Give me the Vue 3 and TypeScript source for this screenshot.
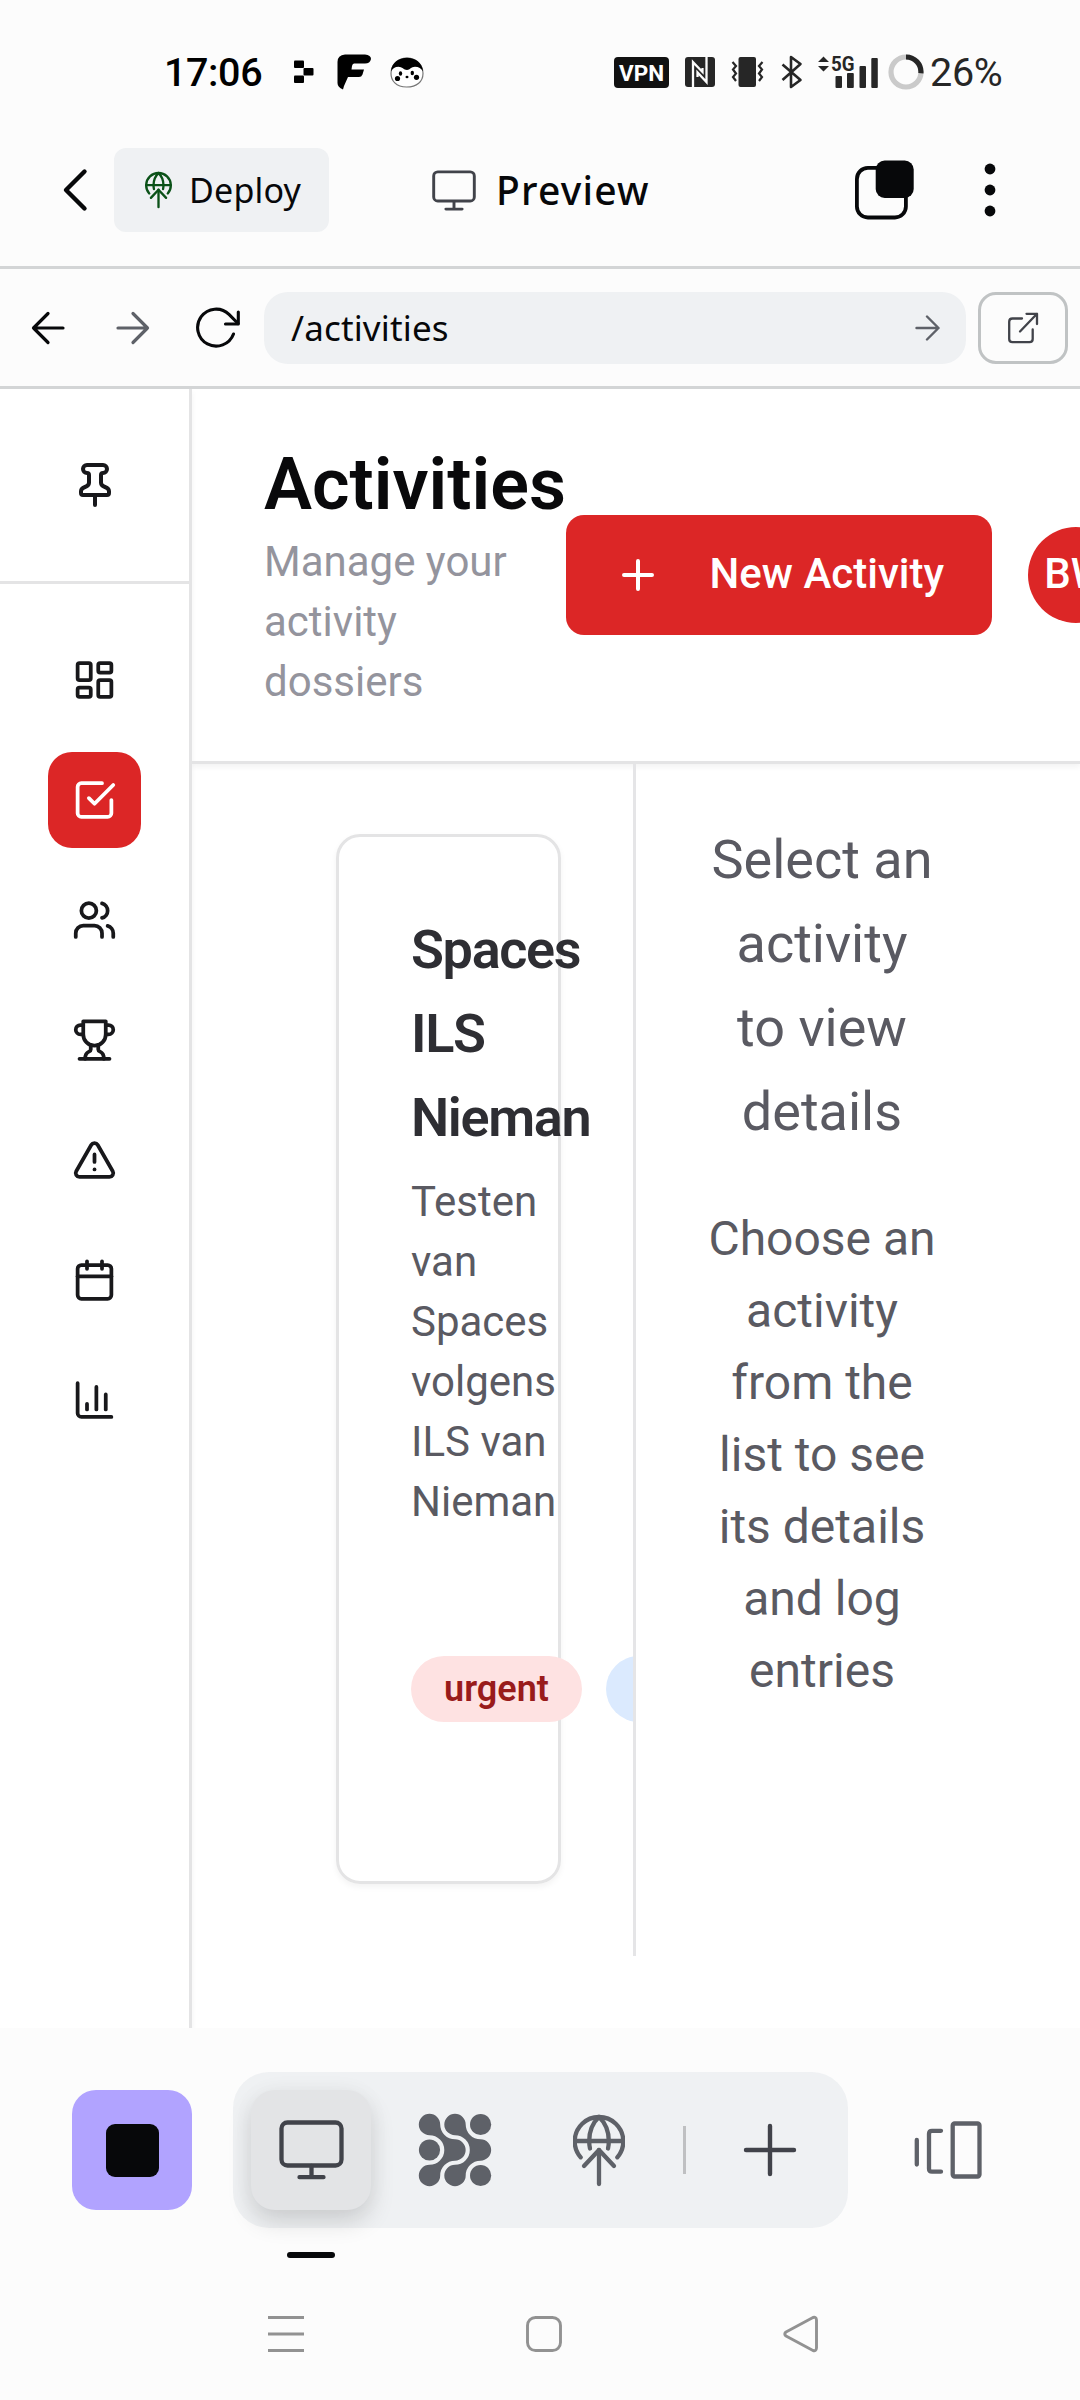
<script setup lang="ts">
interface NavItem {
  name: string
  paths: string[]
  active?: boolean
}

const navItems: NavItem[] = [
  {
    name: 'Dashboard',
    paths: [
      'M4 3h5a1 1 0 0 1 1 1v7a1 1 0 0 1-1 1H4a1 1 0 0 1-1-1V4a1 1 0 0 1 1-1z',
      'M15 3h5a1 1 0 0 1 1 1v3a1 1 0 0 1-1 1h-5a1 1 0 0 1-1-1V4a1 1 0 0 1 1-1z',
      'M15 12h5a1 1 0 0 1 1 1v7a1 1 0 0 1-1 1h-5a1 1 0 0 1-1-1v-7a1 1 0 0 1 1-1z',
      'M4 16h5a1 1 0 0 1 1 1v3a1 1 0 0 1-1 1H4a1 1 0 0 1-1-1v-3a1 1 0 0 1 1-1z',
    ],
  },
  {
    name: 'Activities',
    active: true,
    paths: ['m9 11 3 3L22 4', 'M21 12v7a2 2 0 0 1-2 2H5a2 2 0 0 1-2-2V5a2 2 0 0 1 2-2h11'],
  },
  {
    name: 'People',
    paths: [
      'M16 21v-2a4 4 0 0 0-4-4H6a4 4 0 0 0-4 4v2',
      'M9 3a4 4 0 1 1 0 8a4 4 0 1 1 0-8z',
      'M22 21v-2a4 4 0 0 0-3-3.87',
      'M16 3.13a4 4 0 0 1 0 7.75',
    ],
  },
  {
    name: 'Trophies',
    paths: [
      'M6 9H4.5a2.5 2.5 0 0 1 0-5H6',
      'M18 9h1.5a2.5 2.5 0 0 0 0-5H18',
      'M4 22h16',
      'M10 14.66V17c0 .55-.47.98-.97 1.21C7.85 18.75 7 20.24 7 22',
      'M14 14.66V17c0 .55.47.98.97 1.21C16.15 18.75 17 20.24 17 22',
      'M18 2H6v7a6 6 0 0 0 12 0V2Z',
    ],
  },
  {
    name: 'Alerts',
    paths: [
      'm21.73 18-8-14a2 2 0 0 0-3.48 0l-8 14A2 2 0 0 0 4 21h16a2 2 0 0 0 1.73-3',
      'M12 9v4',
      'M12 17h.01',
    ],
  },
  {
    name: 'Calendar',
    paths: [
      'M8 2v4',
      'M16 2v4',
      'M5 4h14a2 2 0 0 1 2 2v14a2 2 0 0 1-2 2H5a2 2 0 0 1-2-2V6a2 2 0 0 1 2-2z',
      'M3 10h18',
    ],
  },
  {
    name: 'Reports',
    paths: ['M3 3v16a2 2 0 0 0 2 2h16', 'M18 17V9', 'M13 17V5', 'M8 17v-3'],
  },
]

const globePaths: string[] = [
  'M7.7 44.3A24.3 24.3 0 1 1 44.3 44.3',
  'M2 28H50',
  'M26 4C19.5 10 16.2 19 16.2 28Q16.2 32 17 35.5',
  'M26 4C32.5 10 35.8 19 35.8 28Q35.8 32 35 35.5',
  'M26 37V71',
  'M11 53L26 37L41 53',
]
</script>

<template>
  <div class="screen">
    <header class="status">
      <span class="time">17:06</span>
      <svg class="st-app" width="20" height="24" viewBox="294 61 20 24">
        <rect x="294" y="61.5" width="10" height="7.5" rx="1" />
        <rect x="303.5" y="69" width="10" height="7.5" rx="1" />
        <rect x="294" y="76.5" width="10" height="7.5" rx="1" />
      </svg>
      <svg class="st-f" width="36" height="36" viewBox="336 54 36 36">
        <path d="M345 54.5H365Q371 55 371 59Q370 63.5 365 63.5H354Q352.500 63.5 352 66L351.500 69.5H364L362.500 74.5Q361.500 77 359 77H348L344 86L343 89.5Q337.500 87 337.500 83V62Q337.500 55 345 54.5Z" />
      </svg>
      <svg class="st-face" width="34" height="31" viewBox="390 57.5 34 31">
        <path d="M407 58.7C417 58.7 423 66 423 74C423 82 417 87.500 406.500 87.500C396 87.500 391 81 391 74C391 66 397 58.7 407 58.7Z" fill="#fff" stroke="#777" stroke-width="1.200" />
        <path d="M391 72C391.500 63 399 58.300 407 58.300C415 58.300 422.500 63 423 72C421.500 69 418.500 67.300 415 67.300C411 67.300 410 70.500 407 70.500C404 70.500 402 67.300 398.500 67.300C395 67.300 392.500 69 391 72Z" />
        <ellipse cx="400.5" cy="74" rx="1.7" ry="2.3" />
        <ellipse cx="412.300" cy="73.500" rx="1.7" ry="2.3" />
        <circle cx="397.500" cy="79" r="2.600" />
        <circle cx="416.500" cy="77.800" r="2.600" />
        <ellipse cx="407" cy="77.500" rx="1.500" ry="1.200" />
      </svg>
      <span class="vpn">VPN</span>
      <svg class="st-nfc" width="30" height="30" viewBox="0 0 30 30">
        <rect width="30" height="30" rx="3" />
        <path d="M8 31V5.200L17.500 15V11M21.500 -1V25L12.500 15.500V20" fill="none" stroke="#fcfcfc" stroke-width="2.3" />
      </svg>
      <svg class="st-vib" width="33" height="30" viewBox="0 0 33 30">
        <rect x="7.500" width="17.500" height="30" rx="2" />
        <path d="M1.500 5L5 9L2 12.500L5 16.500L2 20L5 24M31.500 5L28 9L31 12.500L28 16.500L31 20L28 24" fill="none" stroke="#262626" stroke-width="2.2" />
      </svg>
      <svg class="st-bt" width="22" height="34" viewBox="0 0 22 34">
        <path d="M1.500 9.500L19.500 25L10 32V2L19.500 9L1.500 25" fill="none" stroke="#262626" stroke-width="2.6" stroke-linejoin="round" />
      </svg>
      <svg class="st-signal" width="62" height="34" viewBox="817 54 62 34">
        <path d="M818 61L823.500 55.500L829 61ZM818 65L823.500 70.500L829 65Z" />
        <text x="831" y="70" textLength="23.5" lengthAdjust="spacingAndGlyphs">5G</text>
        <rect x="835.5" y="75" width="6.5" height="12" rx="1" />
        <rect x="847" y="72" width="6.8" height="15" rx="1" />
        <rect x="859.500" y="65" width="6.5" height="22" rx="1" />
        <rect x="871.300" y="57" width="6.5" height="30" rx="1" />
      </svg>
      <svg class="st-ring" width="36" height="36" viewBox="0 0 36 36" fill="none" stroke-width="5.2">
        <circle cx="18" cy="18" r="15" stroke="#cacaca" />
        <path d="M18 3A15 15 0 0 1 32.900 19.200" stroke="#262626" />
      </svg>
      <span class="percent">26%</span>
    </header>

    <div class="titlebar">
      <svg class="back" width="26" height="44" viewBox="0 0 26 44" fill="none">
        <path d="M22.500 3.500L4 22L22.500 40.500" stroke="#07080a" stroke-width="4.4" stroke-linecap="round" stroke-linejoin="round" />
      </svg>
      <button class="deploy">
        <svg width="27" height="37.5" viewBox="0 0 52 74" fill="none" stroke="#0b5218" stroke-width="4.6" stroke-linecap="round" stroke-linejoin="round">
          <path v-for="d in globePaths" :key="d" :d="d" />
        </svg>
        <span>Deploy</span>
      </button>
      <svg class="mon-small" width="44" height="41" viewBox="0 0 65 60" fill="none" stroke="#41434a" stroke-width="4.3" stroke-linecap="round">
        <rect x="2.500" y="2.500" width="60" height="43" rx="6" />
        <path d="M32.500 46V57M20.500 57.500H44.500" />
      </svg>
      <span class="preview">Preview</span>
      <svg class="copy" width="60" height="60" viewBox="0 0 60 60">
        <rect x="1.900" y="7.900" width="49" height="49.600" rx="11" fill="none" stroke="#07080a" stroke-width="3.8" />
        <rect x="20.700" y="0.500" width="38" height="37.500" rx="9" fill="#07080a" />
      </svg>
      <svg class="dots" width="12" height="54" viewBox="0 0 12 54" fill="#07080a">
        <circle cx="6" cy="6" r="5.400" /><circle cx="6" cy="27" r="5.400" /><circle cx="6" cy="48" r="5.400" />
      </svg>
    </div>

    <div class="urlbar">
      <svg class="u-back" width="34" height="34" viewBox="0 0 34 34" fill="none" stroke="#07080a" stroke-width="3.2" stroke-linecap="round" stroke-linejoin="round">
        <path d="M32 17H2.500M17 2.500L2.500 17L17 31.500" />
      </svg>
      <svg class="u-fwd" width="34" height="34" viewBox="0 0 34 34" fill="none" stroke="#5e6168" stroke-width="3.2" stroke-linecap="round" stroke-linejoin="round">
        <path d="M2 17H31.500M17 2.500L31.500 17L17 31.500" />
      </svg>
      <svg class="u-reload" width="46" height="42" viewBox="195 307 46 42" fill="none" stroke="#07080a" stroke-width="3.1" stroke-linecap="round" stroke-linejoin="round">
        <path d="M233.500 334A18.500 18.500 0 1 1 229 314.300L238 323.500" />
        <path d="M238.300 312V324H225.500" />
      </svg>
      <div class="url">
        <span>/activities</span>
        <svg width="25" height="26" viewBox="0 0 25 26" fill="none" stroke="#5e6168" stroke-width="2.4" stroke-linecap="round" stroke-linejoin="round">
          <path d="M1.500 13H23.500M12 1.500L23.500 13L12 24.500" />
        </svg>
      </div>
      <button class="external">
        <svg width="32" height="32" viewBox="0 0 32 32" fill="none" stroke="#41434a" stroke-width="2.3" stroke-linecap="round" stroke-linejoin="round">
          <path d="M15 6.500H5.500Q2.200 6.500 2.200 9.800V27Q2.200 30.200 5.500 30.200H22.500Q25.700 30.200 25.700 27V17.500" />
          <path d="M13 19.500L30 1.800M19.500 1.800H30V12" />
        </svg>
      </button>
    </div>

    <div class="app">
      <aside class="sidebar">
        <div class="pin">
          <svg class="lucide" width="48" height="48" viewBox="0 0 24 24">
            <path d="M12 17v5" />
            <path d="M9 10.760a2 2 0 0 1-1.110 1.790l-1.780.9A2 2 0 0 0 5 15.240V16a1 1 0 0 0 1 1h12a1 1 0 0 0 1-1v-.76a2 2 0 0 0-1.110-1.790l-1.780-.9A2 2 0 0 1 15 10.760V7a1 1 0 0 1 1-1 2 2 0 0 0 0-4H8a2 2 0 0 0 0 4 1 1 0 0 1 1 1z" />
          </svg>
        </div>
        <nav>
          <a v-for="item in navItems" :key="item.name" class="nav-item" :class="{ active: item.active }">
            <svg class="lucide" width="45" height="48" viewBox="0 0 24 24">
              <path v-for="d in item.paths" :key="d" :d="d" />
            </svg>
          </a>
        </nav>
      </aside>

      <main class="main">
        <div class="page-head">
          <div class="heading">
            <h1>Activities</h1>
            <p>Manage your activity dossiers</p>
          </div>
          <button class="new">
            <svg class="lucide" width="48" height="48" viewBox="0 0 24 24"><path d="M5 12h14M12 5v14" /></svg>
            <span>New Activity</span>
          </button>
          <span class="avatar">BW</span>
        </div>

        <div class="columns">
          <section class="list">
            <article class="card">
              <h3>Spaces ILS Nieman</h3>
              <p>Testen van Spaces volgens ILS van Nieman</p>
              <div class="badges">
                <span class="badge urgent">urgent</span>
                <span class="badge blue"></span>
              </div>
            </article>
          </section>
          <section class="detail">
            <p class="big">Select an activity to view details</p>
            <p class="small">Choose an activity from the list to see its details and log entries</p>
          </section>
        </div>
      </main>
    </div>

    <footer class="bottom">
      <div class="dock-row">
        <button class="stop"><i></i></button>
        <div class="dock">
          <div class="slot selected">
            <svg width="65" height="60" viewBox="0 0 65 60" fill="none" stroke="#41434a" stroke-width="4.3" stroke-linecap="round">
              <rect x="2.500" y="2.500" width="60" height="43" rx="6" />
              <path d="M32.500 46V57M20.500 57.200H44.500" />
            </svg>
            <i class="indicator"></i>
          </div>
          <div class="slot">
            <svg width="74" height="74" viewBox="418 2113 74 74" fill="#5e6168">
              <path d="M429.500 2135.200A10.700 10.700 0 1 1 440.200 2124.500A14.800 14.800 0 0 0 455 2139.300A10.700 10.700 0 0 1 455 2160.700A14.800 14.800 0 0 0 440.200 2175.500A10.700 10.700 0 1 1 429.500 2164.800A14.800 14.800 0 0 0 429.500 2135.200Z" />
              <path transform="translate(25.5 0)" d="M429.500 2135.200A10.700 10.700 0 1 1 440.200 2124.500A14.800 14.800 0 0 0 455 2139.300A10.700 10.700 0 0 1 455 2160.700A14.800 14.800 0 0 0 440.200 2175.500A10.700 10.700 0 1 1 429.500 2164.800A14.800 14.800 0 0 0 429.500 2135.200Z" />
              <circle cx="429.500" cy="2150" r="10.600" />
              <circle cx="480.600" cy="2124.500" r="10.600" />
              <circle cx="480.600" cy="2175.500" r="10.600" />
            </svg>
          </div>
          <div class="slot">
            <svg width="52" height="74" viewBox="0 0 52 74" fill="none" stroke="#5e6168" stroke-width="4.3" stroke-linecap="round" stroke-linejoin="round">
              <path v-for="d in globePaths" :key="d" :d="d" />
            </svg>
          </div>
          <i class="divider"></i>
          <div class="slot">
            <svg width="54" height="54" viewBox="0 0 54 54" stroke="#41434a" stroke-width="4.4" stroke-linecap="round"><path d="M3 27H51M27 3V51" /></svg>
          </div>
        </div>
        <svg class="tabs" width="70" height="60" viewBox="913 2120 70 60" fill="none" stroke="#5e6168" stroke-width="4.3" stroke-linecap="round" stroke-linejoin="round">
          <path d="M916.800 2140V2164.500M941 2130.800H932Q929 2130.800 929 2133.800V2168.700Q929 2171.700 932 2171.700H941" />
          <rect x="952.700" y="2123.500" width="26.800" height="53" rx="2" />
        </svg>
      </div>
      <div class="sysnav">
        <svg width="36" height="38" viewBox="0 0 36 38" stroke="#929292" stroke-width="3.2"><path d="M0 2.500H36M0 19H36M0 35.500H36" /></svg>
        <svg width="36" height="38" viewBox="0 0 36 38" fill="none" stroke="#929292" stroke-width="2.9"><rect x="1.500" y="2.500" width="33" height="33" rx="8" /></svg>
        <svg width="36" height="38" viewBox="0 0 36 38" fill="none" stroke="#929292" stroke-width="2.9" stroke-linejoin="round"><path d="M3 17L30 2.500Q33.200 1.500 33.500 5V33Q33.200 36.500 30 35.500L3 21Q0.500 19 3 17Z" /></svg>
      </div>
    </footer>
  </div>
</template>

<style>
body {
  margin: 0;
  background: #fcfcfc;
}
</style>

<style scoped>
* {
  box-sizing: border-box;
}
svg {
  display: block;
  flex: none;
}
h1, h3, p {
  margin: 0;
}
button {
  border: 0;
  padding: 0;
  font: inherit;
}
.screen {
  width: 1080px;
  height: 2400px;
  overflow: hidden;
  display: flex;
  flex-direction: column;
  background: #fcfcfc;
  font-family: Roboto, sans-serif;
  color: #07080a;
}
.status {
  height: 112px;
  padding: 32px 0 0 164px;
  display: flex;
  align-items: center;
  flex: none;
  fill: #000;
}
.time, .percent {
  font-size: 39.5px;
  font-weight: 500;
  line-height: 46px;
  flex: none;
  margin-top: 2px;
}
.time {
  width: 130px;
  letter-spacing: -0.4px;
  color: #000;
}
.st-f { margin-left: 22px; }
.st-face { margin-left: 18px; }
.vpn {
  width: 55px;
  height: 31px;
  margin-left: 190px;
  border-radius: 4px;
  background: #111;
  color: #fff;
  font: 700 22.5px/32px Roboto, sans-serif;
  text-align: center;
  flex: none;
}
.st-nfc, .st-vib, .st-bt, .st-signal { fill: #262626; }
.st-nfc { margin-left: 16px; }
.st-vib { margin-left: 16px; }
.st-bt { margin-left: 17px; }
.st-signal { margin-left: 14px; overflow: visible; }
.st-signal text { font: 700 20.5px Roboto, sans-serif; }
.st-ring { margin-left: 9px; }
.percent {
  margin-left: 6px;
  letter-spacing: -0.3px;
  font-weight: 450;
  color: #262626;
}

.titlebar {
  height: 157px;
  padding: 2px 0 0 62px;
  display: flex;
  align-items: center;
  flex: none;
  border-bottom: 3px solid #d3d5d6;
}
.deploy {
  width: 215px;
  height: 84px;
  margin-left: 26px;
  padding-left: 31px;
  border-radius: 12px;
  background: #eff1f3;
  display: flex;
  align-items: center;
  gap: 17px;
  font: 400 34px/44px "Noto Sans", sans-serif;
  letter-spacing: 0.2px;
  color: #07080a;
}
.mon-small { margin-left: 103px; }
.preview {
  width: 156px;
  margin-left: 20px;
  font: 500 39px/52px "Noto Sans", sans-serif;
  letter-spacing: 1.2px;
  white-space: nowrap;
}
.copy { margin-left: 203px; }
.dots { margin-left: 69px; }

.urlbar {
  height: 120px;
  padding-left: 31px;
  display: flex;
  align-items: center;
  flex: none;
  border-bottom: 3px solid #d3d5d6;
}
.u-fwd { margin-left: 51px; }
.u-reload { margin-left: 45px; }
.url {
  width: 702px;
  height: 72px;
  margin-left: 23px;
  padding: 0 26px 0 27px;
  border-radius: 24px;
  background: #eff1f3;
  display: flex;
  align-items: center;
  justify-content: space-between;
  font: 400 35px/48px "Noto Sans", sans-serif;
  letter-spacing: 0.15px;
}
.external {
  width: 90px;
  height: 72px;
  margin-left: 12px;
  border: 3px solid #c0c3c4;
  border-radius: 18px;
  background: transparent;
  display: flex;
  align-items: center;
  justify-content: center;
}

.app {
  height: 1639px;
  display: flex;
  flex: none;
  overflow: hidden;
  background: #fff;
}
.lucide {
  fill: none;
  stroke: currentColor;
  stroke-width: 2;
  stroke-linecap: round;
  stroke-linejoin: round;
}
.sidebar {
  width: 192px;
  flex: none;
  border-right: 3px solid #e4e4e5;
  color: #18181b;
  box-shadow: 0 3px 6px rgba(0, 0, 0, 0.05);
}
.pin {
  height: 195px;
  border-bottom: 3px solid #e4e4e5;
  display: flex;
  align-items: center;
  justify-content: center;
}
nav {
  padding: 48px;
  display: flex;
  flex-direction: column;
  gap: 24px;
}
.nav-item {
  height: 96px;
  border-radius: 24px;
  display: flex;
  align-items: center;
  justify-content: center;
}
.nav-item.active {
  background: #dc2626;
  color: #fff;
}
.main {
  width: 888px;
  overflow: hidden;
}
.page-head {
  height: 375px;
  padding: 48px 0 0 72px;
  border-bottom: 3px solid #e4e4e5;
  box-shadow: 0 3px 6px rgba(0, 0, 0, 0.05);
  display: flex;
  align-items: flex-start;
}
.heading {
  width: 302px;
  flex: none;
}
h1 {
  font-size: 72px;
  line-height: 95px;
  font-weight: 600;
  color: #09090b;
}
.heading p {
  width: 262px;
  font-size: 42px;
  line-height: 60px;
  color: #94949d;
}
.new {
  width: 426px;
  height: 120px;
  margin-top: 78px;
  padding: 0 48px;
  border-radius: 18px;
  background: #dc2626;
  color: #fff;
  display: flex;
  align-items: center;
  justify-content: space-between;
  flex: none;
  font-size: 42px;
  font-weight: 500;
  white-space: nowrap;
}
.new span { padding-bottom: 3px; }
.avatar {
  width: 96px;
  height: 96px;
  margin: 90px 0 0 36px;
  border-radius: 50%;
  background: #dc2626;
  color: #fff;
  flex: none;
  font-size: 42px;
  font-weight: 500;
  line-height: 94px;
  text-align: center;
}
.columns {
  margin: 0 72px;
  height: 1192px;
  display: flex;
}
.list {
  width: 372px;
  padding: 70px 72px 72px;
  border-right: 3px solid #e5e5e7;
  overflow: hidden;
  flex: none;
}
.card {
  width: 225px;
  height: 1050px;
  padding: 71px 72px;
  border: 3px solid #e4e4e5;
  border-radius: 24px;
  box-shadow: 0 3px 6px rgba(0, 0, 0, 0.05);
}
.card h3 {
  font-size: 54px;
  line-height: 84px;
  font-weight: 600;
  letter-spacing: -1.35px;
  color: #2e2e33;
}
.card p {
  width: 150px;
  margin-top: 12px;
  font-size: 42px;
  line-height: 60px;
  color: #5a5a62;
}
.badges {
  display: flex;
  gap: 24px;
  margin-top: 124px;
}
.badge {
  height: 66px;
  border-radius: 33px;
  flex: none;
  font-size: 36px;
  line-height: 66px;
  font-weight: 600;
  text-align: center;
}
.urgent {
  width: 171px;
  background: #fee2e2;
  color: #991b1b;
}
.blue {
  width: 150px;
  background: #dbeafe;
}
.detail {
  flex: 1;
  padding: 54px 72px 0;
  text-align: center;
  color: #5a5a62;
}
.big {
  font-size: 54px;
  line-height: 84px;
}
.small {
  margin: 49px -4px 0;
  font-size: 48px;
  line-height: 72px;
}

.bottom {
  flex: 1;
  padding-top: 44px;
}
.dock-row {
  height: 156px;
  padding-left: 72px;
  display: flex;
  align-items: center;
}
.stop {
  width: 120px;
  height: 120px;
  border-radius: 24px;
  background: #b1a3ff;
  display: flex;
  align-items: center;
  justify-content: center;
}
.stop i {
  width: 53px;
  height: 53px;
  border-radius: 9px;
  background: #07080a;
}
.dock {
  width: 615px;
  height: 156px;
  margin-left: 41px;
  padding: 18px;
  border-radius: 36px;
  background: #eff1f3;
  display: flex;
  align-items: center;
  gap: 24px;
}
.slot {
  position: relative;
  width: 120px;
  height: 120px;
  border-radius: 24px;
  display: flex;
  align-items: center;
  justify-content: center;
  flex: none;
}
.selected {
  background: #e3e4e6;
  box-shadow: 0 12px 24px rgba(0, 0, 0, 0.14), 0 0 24px rgba(0, 0, 0, 0.03);
}
.indicator {
  position: absolute;
  left: 36px;
  top: 162px;
  width: 48px;
  height: 6px;
  border-radius: 3px;
  background: #07080a;
}
.divider {
  width: 3px;
  height: 48px;
  background: #bfc0c2;
}
.tabs { margin-left: 65px; }
.sysnav {
  padding: 87px 261px 0 268px;
  display: flex;
  justify-content: space-between;
}
</style>
